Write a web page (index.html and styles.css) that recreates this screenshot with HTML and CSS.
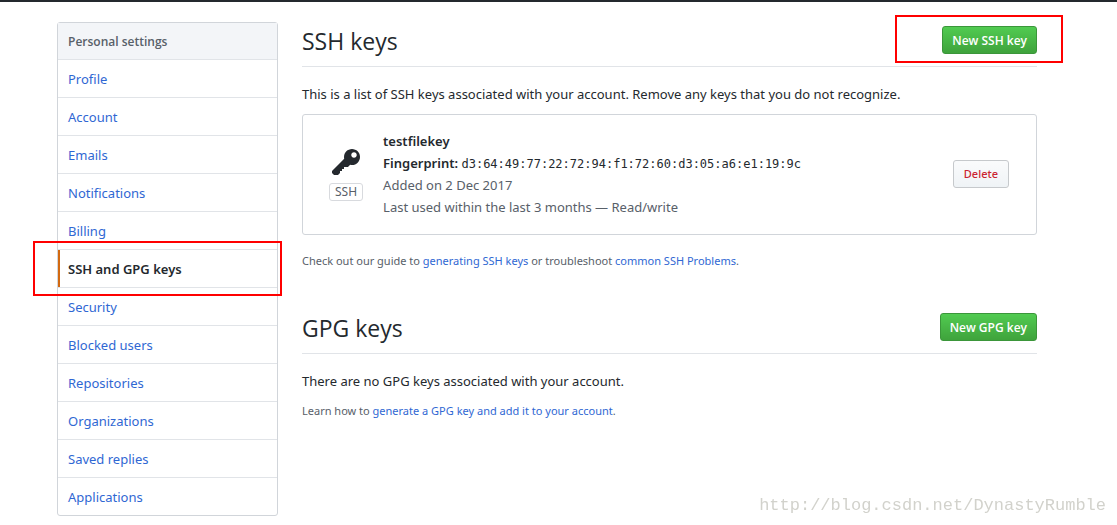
FILE: index.html
```html
<!DOCTYPE html>
<html lang="en">
  <head>
    <meta charset="UTF-8" />
    <meta name="viewport" content="width=device-width, initial-scale=1.0" />
    <title>SSH and GPG keys</title>
    <link rel="stylesheet" href="styles.css">
  </head>
  <body>
    <div class="topbar"></div>
    <div class="container">
      <nav class="menu">
        <h3 class="menu-heading">Personal settings</h3>
        <a class="menu-item" href="#">Profile</a>
        <a class="menu-item" href="#">Account</a>
        <a class="menu-item" href="#">Emails</a>
        <a class="menu-item" href="#">Notifications</a>
        <a class="menu-item" href="#">Billing</a>
        <a class="menu-item selected" href="#">SSH and GPG keys<span class="mark mark-menu"></span></a>
        <a class="menu-item" href="#">Security</a>
        <a class="menu-item" href="#">Blocked users</a>
        <a class="menu-item" href="#">Repositories</a>
        <a class="menu-item" href="#">Organizations</a>
        <a class="menu-item" href="#">Saved replies</a>
        <a class="menu-item" href="#">Applications</a>
      </nav>

      <main class="content">
        <section>
          <div class="subhead">
            <h2>SSH keys</h2>
            <div class="action">
              <button type="button" class="btn btn-primary">New SSH key</button>
              <span class="mark mark-button"></span>
            </div>
          </div>
          <p class="intro">This is a list of SSH keys associated with your account. Remove any keys that you do not recognize.</p>
          <div class="key-box">
            <div class="key-type">
              <svg class="key-icon" viewBox="0 0 14 16" width="28" height="32" aria-hidden="true">
                <path fill="#24292e" fill-rule="evenodd" d="M12.83 2.17C12.08 1.42 11.14 1.03 10 1c-1.13.03-2.08.42-2.83 1.17S6.04 3.86 6.01 5c0 .3.03.59.09.89L0 12v1l1 1h2l1-1v-1h1v-1h1v-1h2l1.09-1.11c.3.08.59.11.91.11 1.14-.03 2.08-.42 2.83-1.17S13.97 6.14 14 5c-.03-1.14-.42-2.08-1.17-2.83zM11 5.38c-.77 0-1.38-.61-1.38-1.38 0-.77.61-1.38 1.38-1.38.77 0 1.38.61 1.38 1.38 0 .77-.61 1.38-1.38 1.38z"/>
              </svg>
              <span class="tag">SSH</span>
            </div>
            <div class="key-info">
              <strong>testfilekey</strong>
              <span><strong>Fingerprint:</strong> <code>d3:64:49:77:22:72:94:f1:72:60:d3:05:a6:e1:19:9c</code></span>
              <span class="muted">Added on 2 Dec 2017</span>
              <span class="muted">Last used within the last 3 months — Read/write</span>
            </div>
            <button type="button" class="btn btn-danger">Delete</button>
          </div>
          <p class="help">Check out our guide to <a href="#">generating SSH keys</a> or troubleshoot <a href="#">common SSH Problems</a>.</p>
        </section>

        <section>
          <div class="subhead">
            <h2>GPG keys</h2>
            <button type="button" class="btn btn-primary">New GPG key</button>
          </div>
          <p class="intro">There are no GPG keys associated with your account.</p>
          <p class="help">Learn how to <a href="#">generate a GPG key and add it to your account</a>.</p>
        </section>
      </main>
    </div>
    <div class="watermark">http://blog.csdn.net/DynastyRumble</div>
  </body>
</html>
```

FILE: styles.css
```css
* {
  box-sizing: border-box;
}
body {
  margin: 0;
  font-family: "Noto Sans", "Open Sans", sans-serif;
  font-size: 13px;
  line-height: 22px;
  color: #24292e;
  background: #fff;
}
a {
  color: #2f67d3;
  text-decoration: none;
}
h2,
h3,
p {
  margin: 0;
}
strong {
  font-weight: 600;
}
.topbar {
  height: 2px;
  background: #24292e;
}
.container {
  display: flex;
  align-items: flex-start;
  gap: 24px;
  padding: 20px 80px 8px 57px;
}

/* side menu */
.menu {
  flex: 0 0 221px;
  border: 1px solid #d1d5da;
  border-radius: 3px;
}
.menu-heading {
  padding: 8px 10px 6px;
  font-family: "Open Sans", sans-serif;
  font-size: 12px;
  font-weight: 600;
  color: #586069;
  background: #f3f5f8;
  border-bottom: 1px solid #e1e4e8;
}
.menu-item {
  display: block;
  position: relative;
  padding: 8px 10px 7px;
  border-bottom: 1px solid #e1e4e8;
}
.menu-item:last-child {
  border-bottom: none;
}
.menu-item.selected {
  font-weight: 600;
  color: #24292e;
  box-shadow: inset 2px 0 0 #d26911;
}

/* red highlight frames */
.mark {
  position: absolute;
  border: 2px solid #f00;
  pointer-events: none;
}
.mark-menu {
  inset: -9px -5px -9px -25px;
}
.mark-button {
  inset: -11px -26px -9px -47px;
}

/* main column */
.content {
  flex: 1;
  min-width: 0;
}
.subhead {
  display: flex;
  align-items: center;
  justify-content: space-between;
  height: 45px;
  padding-bottom: 8px;
  margin-bottom: 16px;
  border-bottom: 1px solid #e1e4e8;
}
.subhead h2 {
  padding-top: 2px;
  font-family: "Open Sans", sans-serif;
  font-size: 23px;
  font-weight: 400;
}
.action {
  position: relative;
  display: flex;
}
.btn {
  height: 28px;
  padding: 0 10px;
  font-family: inherit;
  font-size: 12px;
  font-weight: 600;
  line-height: 20px;
  border: 1px solid #c6c9cc;
  border-radius: 3px;
  cursor: pointer;
}
.btn-primary {
  padding: 1px 9px 0;
  font-family: "Open Sans", sans-serif;
  color: #fff;
  background: linear-gradient(#51cb51, #3fa33c);
  border-color: #3b963a;
}
.btn-danger {
  font-size: 11px;
  font-weight: 500;
  color: #cb2431;
  background: linear-gradient(#fafbfc, #eff3f6);
}
.key-box {
  display: flex;
  align-items: center;
  margin: 9px 0 15px;
  padding: 15px 27px 16px 26px;
  border: 1px solid #d1d5da;
  border-radius: 3px;
}
.key-type {
  display: flex;
  flex-direction: column;
  align-items: center;
  flex: 0 0 34px;
  margin-right: 20px;
}
.tag {
  margin-top: 4px;
  padding: 0 5px;
  font-size: 12px;
  line-height: 16px;
  color: #586069;
  border: 1px solid #d8dade;
  border-radius: 3px;
}
.key-info {
  display: flex;
  flex: 1;
  flex-direction: column;
}
.muted {
  color: #586069;
}
code {
  font-family: "DejaVu Sans Mono", monospace;
  font-size: 12px;
  line-height: 16px;
}
.help {
  font-size: 11px;
  color: #586069;
}
section + section {
  margin-top: 37px;
}
.intro + .help {
  margin-top: 8px;
}

.watermark {
  position: fixed;
  right: 11px;
  bottom: 8px;
  font-family: "Liberation Mono", monospace;
  font-size: 17px;
  color: #d2d2cc;
}
```
